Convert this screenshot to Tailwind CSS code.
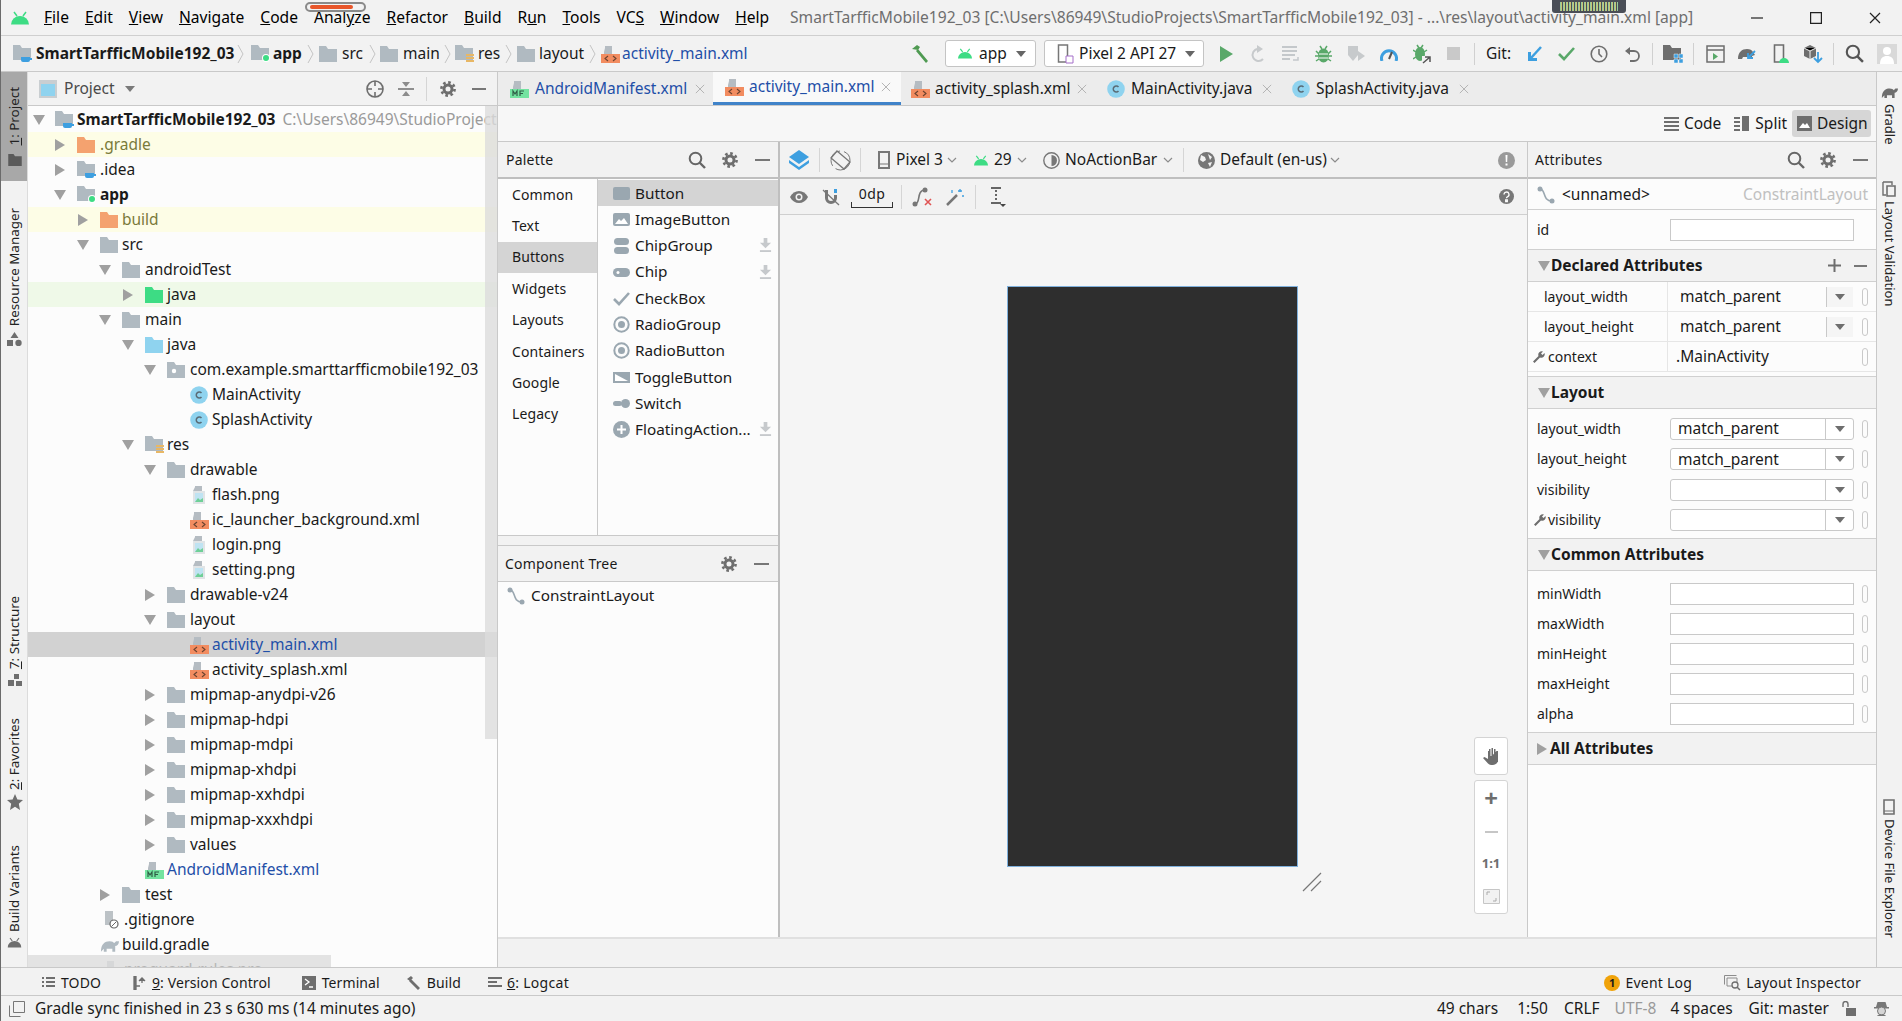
<!DOCTYPE html>
<html>
<head>
<meta charset="UTF-8">
<title>Android Studio</title>
<script src="https://cdn.jsdelivr.net/npm/@tailwindcss/browser@4"></script>
</head>
<body class="relative w-[1902px] h-[1021px] overflow-hidden bg-[#f2f2f2] text-[15.5px] leading-none text-[#1a1a1a] font-['Noto_Sans',sans-serif] [&_svg]:shrink-0">

<svg class="hidden">
  <symbol id="droid" viewBox="0 0 20 14"><path d="M1 13.5a9 8.500 0 0 1 18 0z" fill="currentColor"/><path d="M4 1l3 4M16 1l-3 4" stroke="currentColor" stroke-width="1.500"/></symbol>
  <symbol id="down" viewBox="0 0 12 12"><path d="M0 1h12L6 11z" fill="#a0a0a0"/></symbol>
  <symbol id="right" viewBox="0 0 12 12"><path d="M1 0v12l10-6z" fill="#a0a0a0"/></symbol>
  <symbol id="folder" viewBox="0 0 18 16"><path d="M0 0h7l2 3h9v13H0z" fill="currentColor"/></symbol>
  <symbol id="modfolder" viewBox="0 0 20 18"><path d="M0 0h7l2 3h9v12H0z" fill="#b0bac1"/><path d="M8 12h9v3a2 2 0 0 1-2 2h-5a2 2 0 0 1-2-2z" fill="#3d9fe0"/><path d="M17 13h2v2h-2z" fill="#3d9fe0"/></symbol>
  <symbol id="appfolder" viewBox="0 0 20 18"><path d="M0 0h7l2 3h9v12H0z" fill="#b0bac1"/><circle cx="15" cy="13" r="4" fill="#fff"/><circle cx="15" cy="13" r="3" fill="#3ddc84"/></symbol>
  <symbol id="resfolder" viewBox="0 0 20 18"><path d="M0 0h7l2 3h9v12H0z" fill="#b0bac1"/><path d="M11 9h8v2h-8zM11 12h8v2h-8zM11 15h8v2h-8z" fill="#e8b765"/></symbol>
  <symbol id="pkgfolder" viewBox="0 0 18 16"><path d="M0 0h7l2 3h9v13H0z" fill="#b0bac1"/><circle cx="7" cy="9" r="2.200" fill="#fff"/></symbol>
  <symbol id="xml" viewBox="0 0 19 18"><path d="M4 1h7v8H4zM3 7l1-4v6H3z" fill="#b5bcc2"/><path d="M0 9h19v9H0z" fill="#f28c60"/><path d="M7 11l-3 2.500 3 2.500M12 11l3 2.500-3 2.500" fill="none" stroke="#6b4330" stroke-width="1.100"/></symbol>
  <symbol id="mf" viewBox="0 0 19 18"><path d="M4 1h7v8H4zM3 7l1-4v6H3z" fill="#b5bcc2"/><path d="M0 9h19v9H0z" fill="#73e3a0"/><path d="M3 16v-5l2 3 2-3v5M10 16v-5h4M10 13.500h3" fill="none" stroke="#2f5d46" stroke-width="1.200"/></symbol>
  <symbol id="png" viewBox="0 0 18 18"><path d="M5 0h7v5H5zM3 5l2-4v4z" fill="#b5bcc2"/><path d="M3 5h12v13H3z" fill="#e0e4e6"/><path d="M5 7h8v9H5z" fill="#bfe3f2"/><path d="M5 16l3-4 2 2 3-2v4z" fill="#6fcf97"/></symbol>
  <symbol id="cls" viewBox="0 0 18 18"><circle cx="9" cy="9" r="8.800" fill="#8fd3ef"/><path d="M11.500 7a3 3 0 1 0 0 4" fill="none" stroke="#5a6c76" stroke-width="1.500"/></symbol>
  <symbol id="gear" viewBox="0 0 16 16"><circle cx="8" cy="8" r="4" fill="none" stroke="currentColor" stroke-width="3"/><circle cx="8" cy="8" r="6.600" fill="none" stroke="currentColor" stroke-width="2.600" stroke-dasharray="2.600 2.580"/></symbol>
  <symbol id="search" viewBox="0 0 18 18"><circle cx="7.500" cy="7.500" r="5.800" fill="none" stroke="currentColor" stroke-width="2"/><path d="M11.500 11.500l5.500 5.500" stroke="currentColor" stroke-width="2.400"/></symbol>
  <symbol id="x" viewBox="0 0 12 12"><path d="M1 1l10 10M11 1L1 11" stroke="currentColor" stroke-width="1.200"/></symbol>
  <symbol id="chev" viewBox="0 0 7 20"><path d="M1 1l5 9-5 9" fill="none" stroke="#c4c4c4"/></symbol>
  <symbol id="caret" viewBox="0 0 10 6"><path d="M1 1l4 4 4-4" fill="none" stroke="#8c8c8c" stroke-width="1.200"/></symbol>
  <symbol id="constraint" viewBox="0 0 18 18"><circle cx="3" cy="3" r="2.500" fill="currentColor"/><circle cx="15" cy="15" r="2.500" fill="currentColor"/><path d="M3 3c6 0 2 12 12 12" fill="none" stroke="currentColor" stroke-width="1.600"/></symbol>
  <symbol id="dl" viewBox="0 0 14 16"><path d="M5 0h4v5h4l-6 6-6-6h4z" fill="#c6c9cc"/><path d="M1 13h12v2H1z" fill="#c6c9cc"/></symbol>
</svg>

<div class="absolute left-0 top-0 w-px h-full bg-[#6b6b6b] z-30"></div>
<div class="absolute left-[305px] top-[2px] w-[61px] h-[10px] rounded-full border-2 border-[#8a8a8a] bg-[#f2f2f2] flex items-center px-[2px] z-20"><div class="w-[43px] h-[4px] bg-[#e8562a] rounded-full ml-[1px]"></div></div>
<div class="absolute left-[1552px] top-0 w-[74px] h-[13px] rounded-b-[3px] bg-[#4a4e57] flex items-center justify-center z-20"><div class="w-[58px] h-[9px] bg-[repeating-linear-gradient(90deg,#7fd0b0_0,#e0c060_2px,#4a4e57_2px,#4a4e57_3px)]"></div></div>

<!-- title bar -->
<div class="h-[36px] flex items-center border-b border-[#cfcfcf] text-[#000]">
  <svg class="w-[20px] h-[14px] ml-[10px] text-[#3ddc84]"><use href="#droid"/></svg>
  <div class="flex items-center gap-[16px] ml-[14px] text-[15.6px]">
    <span><u>F</u>ile</span><span><u>E</u>dit</span><span><u>V</u>iew</span><span><u>N</u>avigate</span><span><u>C</u>ode</span><span>Anal<u>y</u>ze</span><span><u>R</u>efactor</span><span><u>B</u>uild</span><span>R<u>u</u>n</span><span><u>T</u>ools</span><span>VC<u>S</u></span><span><u>W</u>indow</span><span><u>H</u>elp</span>
  </div>
  <span class="absolute left-[790px] top-[10px] text-[#6e6e6e] whitespace-nowrap text-[15.6px]">SmartTarfficMobile192_03 [C:\Users\86949\StudioProjects\SmartTarfficMobile192_03] - ...\res\layout\activity_main.xml [app]</span>
  <div class="ml-auto flex items-center gap-[47px] pr-[21px]">
    <svg class="w-[12px] h-[12px]" viewBox="0 0 12 12"><path d="M0 6h12" stroke="#222" stroke-width="1.200"/></svg>
    <svg class="w-[12px] h-[12px]" viewBox="0 0 12 12"><path d="M.6.6h10.800v10.800H.6z" fill="none" stroke="#222" stroke-width="1.200"/></svg>
    <svg class="w-[12px] h-[12px] text-[#222]"><use href="#x"/></svg>
  </div>
</div>

<!-- nav bar -->
<div class="h-[36px] flex items-center border-b border-[#c9c9c9] pl-[13px]">
  <svg class="w-[20px] h-[18px]"><use href="#modfolder"/></svg>
  <b class="w-[197px] ml-[3px] whitespace-nowrap">SmartTarfficMobile192_03</b>
  <svg class="w-[7px] h-[20px] ml-[4px]"><use href="#chev"/></svg>
  <svg class="w-[20px] h-[18px] ml-[7px]"><use href="#appfolder"/></svg>
  <b class="w-[29px] ml-[2px]">app</b>
  <svg class="w-[7px] h-[20px] ml-[5px]"><use href="#chev"/></svg>
  <svg class="w-[18px] h-[16px] ml-[5px] text-[#b0bac1]"><use href="#folder"/></svg>
  <span class="w-[22px] ml-[5px]">src</span>
  <svg class="w-[7px] h-[20px] ml-[5px]"><use href="#chev"/></svg>
  <svg class="w-[18px] h-[16px] ml-[4px] text-[#b0bac1]"><use href="#folder"/></svg>
  <span class="w-[36px] ml-[5px]">main</span>
  <svg class="w-[7px] h-[20px] ml-[5px]"><use href="#chev"/></svg>
  <svg class="w-[20px] h-[18px] ml-[4px]"><use href="#resfolder"/></svg>
  <span class="w-[22px] ml-[3px]">res</span>
  <svg class="w-[7px] h-[20px] ml-[5px]"><use href="#chev"/></svg>
  <svg class="w-[18px] h-[16px] ml-[5px] text-[#b0bac1]"><use href="#folder"/></svg>
  <span class="w-[45px] ml-[4px]">layout</span>
  <svg class="w-[7px] h-[20px] ml-[5px]"><use href="#chev"/></svg>
  <svg class="w-[19px] h-[18px] ml-[5px]"><use href="#xml"/></svg>
  <span class="w-[124px] ml-[2px] text-[#1f4fa8] whitespace-nowrap">activity_main.xml</span>

  <svg class="w-[19px] h-[19px] ml-[165px]" viewBox="0 0 19 19"><path d="M1 5l5-4 3 2-2 3zM7 5l10 12-2 2L5 7z" fill="#4f9a52"/></svg>
  <div class="w-[91px] h-[27px] ml-[15px] bg-white border border-[#c4c4c4] rounded-[3px] flex items-center pl-[11px]">
    <svg class="w-[16px] h-[11px] text-[#3ddc84]"><use href="#droid"/></svg><span class="ml-[6px]">app</span>
    <svg class="w-[10px] h-[6px] ml-[9px]" viewBox="0 0 10 6"><path d="M0 0h10L5 6z" fill="#666"/></svg>
  </div>
  <div class="w-[160px] h-[27px] ml-[8px] bg-white border border-[#c4c4c4] rounded-[3px] flex items-center pl-[12px]">
    <svg class="w-[17px] h-[20px]" viewBox="0 0 17 20"><path d="M1.500 1h9v17h-9z" fill="none" stroke="#777" stroke-width="1.500"/><path d="M9 12h7v7H9z" fill="#fff" stroke="#a56fc9"/></svg>
    <span class="ml-[5px] whitespace-nowrap">Pixel 2 API 27</span>
    <svg class="w-[10px] h-[6px] ml-[9px]" viewBox="0 0 10 6"><path d="M0 0h10L5 6z" fill="#666"/></svg>
  </div>
  <svg class="w-[13px] h-[16px] ml-[16px]" viewBox="0 0 13 16"><path d="M0 0l13 8-13 8z" fill="#59a869"/></svg>
  <svg class="w-[16px] h-[18px] ml-[17px]" viewBox="0 0 16 18"><path d="M13 14A6 6 0 1 1 8 4" fill="none" stroke="#c7cacc" stroke-width="2"/><path d="M7 0l6 4-6 4z" fill="#c7cacc"/></svg>
  <svg class="w-[18px] h-[18px] ml-[16px]" viewBox="0 0 18 18"><path d="M0 1h15v2H0zM0 5h15v2H0zM0 9h13v2H0zM0 13h8v2H0z" fill="#c4c8cb"/><path d="M11 15h5v-3" fill="none" stroke="#c4c8cb" stroke-width="1.500"/></svg>
  <svg class="w-[17px] h-[18px] ml-[15px]" viewBox="0 0 17 18"><ellipse cx="8.500" cy="10.500" rx="5.500" ry="7" fill="#59a869"/><path d="M1 6l3 3M16 6l-3 3M0 11h3M17 11h-3M1 16l3-2M16 16l-3-2M5 1l2 3M12 1l-2 3" stroke="#59a869" stroke-width="1.500"/><path d="M4 9h9M4 13h9" stroke="#fff"/></svg>
  <svg class="w-[19px] h-[20px] ml-[15px]" viewBox="0 0 19 20"><path d="M1 2h10v9l-5 6-5-6z" fill="#c7cacc"/><path d="M11 7l7 5-7 5z" fill="#c7cacc"/></svg>
  <svg class="w-[18px] h-[14px] ml-[14px]" viewBox="0 0 18 14"><path d="M2 14a7.500 7.500 0 1 1 14 0" fill="none" stroke="#3d9fe0" stroke-width="3"/><path d="M9 12l3-7" stroke="#555" stroke-width="2"/></svg>
  <svg class="w-[19px] h-[20px] ml-[15px]" viewBox="0 0 19 20"><ellipse cx="7" cy="10" rx="5" ry="7" fill="#59a869"/><path d="M0 6l3 2M14 6l-3 2M0 15l3-2M4 1l2 3M10 1L8 4" stroke="#59a869" stroke-width="1.500"/><path d="M9 12h10v8H9z" fill="#f2f2f2"/><path d="M10 19l7-6M12 13h5v5" fill="none" stroke="#555" stroke-width="1.500"/></svg>
  <div class="w-[13px] h-[13px] ml-[15px] bg-[#c9c9c9]"></div>
  <div class="w-px h-[22px] ml-[14px] bg-[#d0d0d0]"></div>
  <span class="ml-[11px] w-[25px]">Git:</span>
  <svg class="w-[15px] h-[16px] ml-[16px]" viewBox="0 0 15 16"><path d="M14 1L4 12" stroke="#3d9fe0" stroke-width="2.500"/><path d="M1 6v9h9v-3H4V6z" fill="#3d9fe0"/></svg>
  <svg class="w-[17px] h-[14px] ml-[16px]" viewBox="0 0 17 14"><path d="M1 7l5 5L16 1" fill="none" stroke="#59a869" stroke-width="2.600"/></svg>
  <svg class="w-[18px] h-[18px] ml-[15px]" viewBox="0 0 18 18"><circle cx="9" cy="9" r="7.800" fill="none" stroke="#6e6e6e" stroke-width="1.600"/><path d="M9 4v5l3 3" fill="none" stroke="#6e6e6e" stroke-width="1.600"/></svg>
  <svg class="w-[16px] h-[16px] ml-[16px]" viewBox="0 0 16 16"><path d="M4 5h6a5 5 0 0 1 0 10H6" fill="none" stroke="#6e6e6e" stroke-width="1.800"/><path d="M6 1L1 5l5 4z" fill="#6e6e6e"/></svg>
  <div class="w-px h-[22px] ml-[12px] bg-[#d0d0d0]"></div>
  <svg class="w-[20px] h-[18px] ml-[10px]" viewBox="0 0 20 18"><path d="M0 0h7l2 3h9v12H0z" fill="#6e6e6e"/><path d="M11 9h4v4h-4zM16 9h4v4h-4zM16 14h4v4h-4zM11 14h4v4h-4z" fill="#3d9fe0" stroke="#f2f2f2" stroke-width=".5"/></svg>
  <div class="w-px h-[22px] ml-[10px] bg-[#d0d0d0]"></div>
  <svg class="w-[19px] h-[18px] ml-[12px]" viewBox="0 0 19 18"><path d="M1 1h17v16H1zM1 5h17" fill="none" stroke="#6e6e6e" stroke-width="1.500"/><path d="M7 8l5 3.500-5 3.500z" fill="#59a869"/></svg>
  <svg class="w-[20px] h-[20px] ml-[12px]" viewBox="0 0 20 20"><path d="M1 15c0-7 4-10 9-10 3 0 5 1 6 3l2 3-3 1v3h-3l-1-2H6l-1 2z" fill="#6e6e6e"/><path d="M18 7l-7 7M11 9v5h5" fill="none" stroke="#3d9fe0" stroke-width="1.800"/></svg>
  <svg class="w-[16px] h-[20px] ml-[16px]" viewBox="0 0 16 20"><path d="M1.500 1h9v17h-9z" fill="none" stroke="#6e6e6e" stroke-width="1.600"/><path d="M6 19a5 5 0 0 1 10 0z" fill="#3ddc84"/></svg>
  <svg class="w-[20px] h-[20px] ml-[14px]" viewBox="0 0 20 20"><path d="M1 4l6-3 6 3v8l-6 3-6-3z" fill="#6e6e6e"/><path d="M1 4l6 3 6-3M7 7v8" stroke="#f2f2f2"/><path d="M15 8v10M11 14l4 4 4-4" fill="none" stroke="#3d9fe0" stroke-width="1.800"/></svg>
  <div class="w-px h-[22px] ml-[10px] bg-[#d0d0d0]"></div>
  <svg class="w-[19px] h-[19px] ml-[11px] text-[#555]"><use href="#search"/></svg>
  <svg class="w-[20px] h-[20px] ml-[13px]" viewBox="0 0 20 20"><path d="M0 0h20v20H0z" fill="#d9d9d9"/><circle cx="10" cy="7" r="4" fill="#fff"/><path d="M3 20c0-6 3-8 7-8s7 2 7 8z" fill="#fff"/></svg>
</div>

<!-- main -->
<div class="h-[895px] flex">

  <!-- left stripe -->
  <div class="w-[28px] flex flex-col items-center border-r border-[#dcdcdc] pl-[2px] text-[13.4px] text-[#222]">
    <div class="w-[calc(100%+2px)] -ml-[2px] h-[109px] bg-[#a8a8a8] flex flex-col items-center pt-[15px] pl-[2px]">
      <span class="[writing-mode:vertical-rl] rotate-180 whitespace-nowrap"><u>1</u>: Project</span>
      <svg class="w-[14px] h-[12px] mt-[9px] text-[#5a5a5a]"><use href="#folder"/></svg>
    </div>
    <span class="mt-[27px] [writing-mode:vertical-rl] rotate-180 whitespace-nowrap">Resource Manager</span>
    <svg class="w-[15px] h-[14px] mt-[6px]" viewBox="0 0 15 14"><path d="M7.500 0l4 6h-8zM0 8h6v6H0z" fill="#6e6e6e"/><circle cx="11.500" cy="11" r="3.200" fill="#6e6e6e"/></svg>
    <span class="mt-[250px] [writing-mode:vertical-rl] rotate-180 whitespace-nowrap"><u>7</u>: Structure</span>
    <svg class="w-[14px] h-[12px] mt-[5px]" viewBox="0 0 14 12"><path d="M6 0h5v5H6zM0 6h6v6H0zM8 7h6v5H8z" fill="#6e6e6e"/></svg>
    <span class="mt-[32px] [writing-mode:vertical-rl] rotate-180 whitespace-nowrap"><u>2</u>: Favorites</span>
    <svg class="w-[16px] h-[16px] mt-[4px]" viewBox="0 0 16 16"><path d="M8 0l2.400 5.400 5.600.6-4.200 3.800L13 16l-5-3.200L3 16l1.200-6.200L0 6l5.600-.6z" fill="#6e6e6e"/></svg>
    <span class="mt-[35px] [writing-mode:vertical-rl] rotate-180 whitespace-nowrap">Build Variants</span>
    <svg class="w-[15px] h-[11px] mt-[5px] text-[#6e6e6e]"><use href="#droid"/></svg>
  </div>

  <!-- project panel -->
  <div class="w-[470px] flex flex-col border-r border-[#c9c9c9]">
    <div class="h-[34px] flex items-center border-b border-[#c9c9c9] relative">
      <svg class="w-[18px] h-[18px] ml-[11px]" viewBox="0 0 18 18"><path d="M0 0h18v18H0z" fill="#c9ced1"/><path d="M2 4h14v12H2z" fill="#8fd3ef"/></svg>
      <span class="ml-[7px] text-[#4a4a4a]">Project</span>
      <svg class="w-[10px] h-[6px] ml-[10px]" viewBox="0 0 10 6"><path d="M0 0h10L5 6z" fill="#7a7a7a"/></svg>
      <svg class="w-[18px] h-[18px] ml-[231px]" viewBox="0 0 18 18"><circle cx="9" cy="9" r="8" fill="none" stroke="#6e6e6e" stroke-width="1.600"/><path d="M9 1v5M9 12v5M1 9h5M12 9h5" stroke="#6e6e6e" stroke-width="1.600"/></svg>
      <svg class="w-[16px] h-[18px] ml-[14px]" viewBox="0 0 16 18"><path d="M0 9h16" stroke="#6e6e6e" stroke-width="1.500"/><path d="M4 2h8L8 7zM8 11l4 5H4z" fill="#8c8c8c"/></svg>
      <div class="w-px h-[24px] ml-[12px] bg-[#d5d5d5]"></div>
      <svg class="w-[16px] h-[16px] ml-[13px] text-[#6e6e6e]"><use href="#gear"/></svg>
      <div class="w-[14px] h-[2px] ml-[16px] bg-[#777]"></div>
    </div>
    <div class="relative flex-1 overflow-hidden bg-[#fcfcfc] pt-px">
      <div class="h-[25px] flex items-center pl-[5px]"><svg class="w-[12px] h-[12px]"><use href="#down"/></svg><svg class="w-[20px] h-[18px] ml-[10px]"><use href="#modfolder"/></svg><b class="ml-[2px] whitespace-nowrap">SmartTarfficMobile192_03</b><span class="ml-[7px] text-[#9a9a9a] whitespace-nowrap">C:\Users\86949\StudioProjects\SmartTarfficMobile192_03</span></div>
      <div class="h-[25px] flex items-center pl-[26px] bg-[#fdfde6] text-[#7a7a3a]"><svg class="w-[12px] h-[12px]"><use href="#right"/></svg><svg class="w-[18px] h-[16px] ml-[11px] text-[#f4a26f]"><use href="#folder"/></svg><span class="ml-[5px]">.gradle</span></div>
      <div class="h-[25px] flex items-center pl-[26px]"><svg class="w-[12px] h-[12px]"><use href="#right"/></svg><svg class="w-[20px] h-[18px] ml-[11px]"><use href="#modfolder"/></svg><span class="ml-[3px]">.idea</span></div>
      <div class="h-[25px] flex items-center pl-[26px]"><svg class="w-[12px] h-[12px]"><use href="#down"/></svg><svg class="w-[20px] h-[18px] ml-[11px]"><use href="#appfolder"/></svg><b class="ml-[3px]">app</b></div>
      <div class="h-[25px] flex items-center pl-[49px] bg-[#fdfde6] text-[#7a7a3a]"><svg class="w-[12px] h-[12px]"><use href="#right"/></svg><svg class="w-[18px] h-[16px] ml-[11px] text-[#f4a26f]"><use href="#folder"/></svg><span class="ml-[4px]">build</span></div>
      <div class="h-[25px] flex items-center pl-[49px]"><svg class="w-[12px] h-[12px]"><use href="#down"/></svg><svg class="w-[18px] h-[16px] ml-[11px] text-[#b0bac1]"><use href="#folder"/></svg><span class="ml-[4px]">src</span></div>
      <div class="h-[25px] flex items-center pl-[71px]"><svg class="w-[12px] h-[12px]"><use href="#down"/></svg><svg class="w-[18px] h-[16px] ml-[11px] text-[#b0bac1]"><use href="#folder"/></svg><span class="ml-[5px]">androidTest</span></div>
      <div class="h-[25px] flex items-center pl-[94px] bg-[#eff9e8]"><svg class="w-[12px] h-[12px]"><use href="#right"/></svg><svg class="w-[18px] h-[16px] ml-[11px] text-[#3ddc84]"><use href="#folder"/></svg><span class="ml-[4px]">java</span></div>
      <div class="h-[25px] flex items-center pl-[71px]"><svg class="w-[12px] h-[12px]"><use href="#down"/></svg><svg class="w-[18px] h-[16px] ml-[11px] text-[#b0bac1]"><use href="#folder"/></svg><span class="ml-[5px]">main</span></div>
      <div class="h-[25px] flex items-center pl-[94px]"><svg class="w-[12px] h-[12px]"><use href="#down"/></svg><svg class="w-[18px] h-[16px] ml-[11px] text-[#8fd3ef]"><use href="#folder"/></svg><span class="ml-[4px]">java</span></div>
      <div class="h-[25px] flex items-center pl-[116px]"><svg class="w-[12px] h-[12px]"><use href="#down"/></svg><svg class="w-[18px] h-[16px] ml-[11px]"><use href="#pkgfolder"/></svg><span class="ml-[5px] whitespace-nowrap">com.example.smarttarfficmobile192_03</span></div>
      <div class="h-[25px] flex items-center pl-[162px]"><svg class="w-[18px] h-[18px]"><use href="#cls"/></svg><span class="ml-[4px]">MainActivity</span></div>
      <div class="h-[25px] flex items-center pl-[162px]"><svg class="w-[18px] h-[18px]"><use href="#cls"/></svg><span class="ml-[4px]">SplashActivity</span></div>
      <div class="h-[25px] flex items-center pl-[94px]"><svg class="w-[12px] h-[12px]"><use href="#down"/></svg><svg class="w-[20px] h-[18px] ml-[11px]"><use href="#resfolder"/></svg><span class="ml-[2px]">res</span></div>
      <div class="h-[25px] flex items-center pl-[116px]"><svg class="w-[12px] h-[12px]"><use href="#down"/></svg><svg class="w-[18px] h-[16px] ml-[11px] text-[#b0bac1]"><use href="#folder"/></svg><span class="ml-[5px]">drawable</span></div>
      <div class="h-[25px] flex items-center pl-[162px]"><svg class="w-[18px] h-[18px]"><use href="#png"/></svg><span class="ml-[4px]">flash.png</span></div>
      <div class="h-[25px] flex items-center pl-[162px]"><svg class="w-[19px] h-[18px]"><use href="#xml"/></svg><span class="ml-[3px]">ic_launcher_background.xml</span></div>
      <div class="h-[25px] flex items-center pl-[162px]"><svg class="w-[18px] h-[18px]"><use href="#png"/></svg><span class="ml-[4px]">login.png</span></div>
      <div class="h-[25px] flex items-center pl-[162px]"><svg class="w-[18px] h-[18px]"><use href="#png"/></svg><span class="ml-[4px]">setting.png</span></div>
      <div class="h-[25px] flex items-center pl-[116px]"><svg class="w-[12px] h-[12px]"><use href="#right"/></svg><svg class="w-[18px] h-[16px] ml-[11px] text-[#b0bac1]"><use href="#folder"/></svg><span class="ml-[5px]">drawable-v24</span></div>
      <div class="h-[25px] flex items-center pl-[116px]"><svg class="w-[12px] h-[12px]"><use href="#down"/></svg><svg class="w-[18px] h-[16px] ml-[11px] text-[#b0bac1]"><use href="#folder"/></svg><span class="ml-[5px]">layout</span></div>
      <div class="h-[25px] flex items-center pl-[162px] bg-[#d2d2d2] text-[#1f4fa8]"><svg class="w-[19px] h-[18px]"><use href="#xml"/></svg><span class="ml-[3px]">activity_main.xml</span></div>
      <div class="h-[25px] flex items-center pl-[162px]"><svg class="w-[19px] h-[18px]"><use href="#xml"/></svg><span class="ml-[3px]">activity_splash.xml</span></div>
      <div class="h-[25px] flex items-center pl-[116px]"><svg class="w-[12px] h-[12px]"><use href="#right"/></svg><svg class="w-[18px] h-[16px] ml-[11px] text-[#b0bac1]"><use href="#folder"/></svg><span class="ml-[5px]">mipmap-anydpi-v26</span></div>
      <div class="h-[25px] flex items-center pl-[116px]"><svg class="w-[12px] h-[12px]"><use href="#right"/></svg><svg class="w-[18px] h-[16px] ml-[11px] text-[#b0bac1]"><use href="#folder"/></svg><span class="ml-[5px]">mipmap-hdpi</span></div>
      <div class="h-[25px] flex items-center pl-[116px]"><svg class="w-[12px] h-[12px]"><use href="#right"/></svg><svg class="w-[18px] h-[16px] ml-[11px] text-[#b0bac1]"><use href="#folder"/></svg><span class="ml-[5px]">mipmap-mdpi</span></div>
      <div class="h-[25px] flex items-center pl-[116px]"><svg class="w-[12px] h-[12px]"><use href="#right"/></svg><svg class="w-[18px] h-[16px] ml-[11px] text-[#b0bac1]"><use href="#folder"/></svg><span class="ml-[5px]">mipmap-xhdpi</span></div>
      <div class="h-[25px] flex items-center pl-[116px]"><svg class="w-[12px] h-[12px]"><use href="#right"/></svg><svg class="w-[18px] h-[16px] ml-[11px] text-[#b0bac1]"><use href="#folder"/></svg><span class="ml-[5px]">mipmap-xxhdpi</span></div>
      <div class="h-[25px] flex items-center pl-[116px]"><svg class="w-[12px] h-[12px]"><use href="#right"/></svg><svg class="w-[18px] h-[16px] ml-[11px] text-[#b0bac1]"><use href="#folder"/></svg><span class="ml-[5px]">mipmap-xxxhdpi</span></div>
      <div class="h-[25px] flex items-center pl-[116px]"><svg class="w-[12px] h-[12px]"><use href="#right"/></svg><svg class="w-[18px] h-[16px] ml-[11px] text-[#b0bac1]"><use href="#folder"/></svg><span class="ml-[5px]">values</span></div>
      <div class="h-[25px] flex items-center pl-[117px] text-[#1f4fa8]"><svg class="w-[19px] h-[18px]"><use href="#mf"/></svg><span class="ml-[3px]">AndroidManifest.xml</span></div>
      <div class="h-[25px] flex items-center pl-[71px]"><svg class="w-[12px] h-[12px]"><use href="#right"/></svg><svg class="w-[18px] h-[16px] ml-[11px] text-[#b0bac1]"><use href="#folder"/></svg><span class="ml-[5px]">test</span></div>
      <div class="h-[25px] flex items-center pl-[74px]"><svg class="w-[18px] h-[18px]" viewBox="0 0 18 18"><path d="M3 0h8v14H3z" fill="#bcc2c6"/><circle cx="12" cy="13" r="4" fill="#fff" stroke="#666" stroke-width="1.200"/><path d="M9.500 15.500l5-5" stroke="#666"/></svg><span class="ml-[4px]">.gitignore</span></div>
      <div class="h-[25px] flex items-center pl-[72px]"><svg class="w-[19px] h-[15px]" viewBox="0 0 20 15"><path d="M1 15C1 7 5 4 10 4c3 0 4 1 5 2l2-2 3 0c0 3-2 5-4 5v6h-3v-3H7v3H4v-3z" fill="#b0bac1"/></svg><span class="ml-[3px]">build.gradle</span></div>
      <div class="h-[25px] flex items-center pl-[74px]"><svg class="w-[18px] h-[18px]" viewBox="0 0 18 18"><path d="M5 0h7v18H5z" fill="#bcc2c6"/></svg><span class="ml-[4px]">proguard-rules.pro</span></div>
      <div class="absolute right-0 top-0 w-[12px] h-[633px] bg-[#dcdcdc]/80"></div>
      <div class="absolute left-0 bottom-0 w-[303px] h-[12px] bg-[#dcdcdc]/80"></div>
    </div>
  </div>

  <!-- editor -->
  <div class="w-[1378px] flex flex-col">
    <!-- tabs -->
    <div class="h-[34px] flex items-center bg-[#ececec] border-b border-[#c9c9c9]">
      <svg class="w-[19px] h-[18px] ml-[12px]"><use href="#mf"/></svg>
      <span class="w-[152px] ml-[6px] text-[#1f4fa8] whitespace-nowrap">AndroidManifest.xml</span>
      <svg class="w-[10px] h-[10px] ml-[8px] text-[#b5b5b5]"><use href="#x"/></svg>
      <div class="w-[188px] h-[33px] ml-[8px] flex items-center bg-[#f9f9f9] border-b-[3px] border-[#4083c9]">
        <svg class="w-[19px] h-[18px] ml-[12px]"><use href="#xml"/></svg>
        <span class="w-[124px] ml-[5px] text-[#1f4fa8] whitespace-nowrap">activity_main.xml</span>
        <svg class="w-[10px] h-[10px] ml-[8px] text-[#b5b5b5]"><use href="#x"/></svg>
      </div>
      <svg class="w-[19px] h-[18px] ml-[10px]"><use href="#xml"/></svg>
      <span class="w-[134px] ml-[5px] whitespace-nowrap">activity_splash.xml</span>
      <svg class="w-[10px] h-[10px] ml-[8px] text-[#b5b5b5]"><use href="#x"/></svg>
      <svg class="w-[18px] h-[18px] ml-[20px]"><use href="#cls"/></svg>
      <span class="w-[123px] ml-[6px] whitespace-nowrap">MainActivity.java</span>
      <svg class="w-[10px] h-[10px] ml-[8px] text-[#b5b5b5]"><use href="#x"/></svg>
      <svg class="w-[18px] h-[18px] ml-[20px]"><use href="#cls"/></svg>
      <span class="w-[134px] ml-[6px] whitespace-nowrap">SplashActivity.java</span>
      <svg class="w-[10px] h-[10px] ml-[9px] text-[#b5b5b5]"><use href="#x"/></svg>
    </div>
    <!-- code / split / design -->
    <div class="h-[36px] flex items-center justify-end border-b border-[#c9c9c9] bg-[#f7f7f7] pr-[5px]">
      <svg class="w-[15px] h-[15px]" viewBox="0 0 15 15"><path d="M0 1h15v2H0zM0 5h15v2H0zM0 9h15v2H0zM0 13h15v2H0z" fill="#6e6e6e"/></svg>
      <span class="ml-[5px]">Code</span>
      <svg class="w-[15px] h-[15px] ml-[13px]" viewBox="0 0 15 15"><path d="M0 1h6v2H0zM0 5h6v2H0zM0 9h6v2H0zM0 13h6v2H0zM8 0h7v15H8z" fill="#6e6e6e"/></svg>
      <span class="ml-[6px]">Split</span>
      <div class="h-[27px] w-[79px] ml-[5px] rounded-[3px] bg-[#d6d6d6] flex items-center pl-[5px]">
        <svg class="w-[15px] h-[15px]" viewBox="0 0 15 15"><path d="M0 0h15v15H0z" fill="#6e6e6e"/><path d="M2 12l4-5 2 2 2-2 3 5z" fill="#fff"/></svg>
        <span class="ml-[5px] whitespace-nowrap">Design</span>
      </div>
    </div>
    <div class="h-[795px] flex">

      <!-- palette -->
      <div class="w-[282px] flex flex-col border-r-2 border-[#bfbfbf] text-[14px]">
        <div class="h-[37px] flex items-center border-b-2 border-[#bfbfbf] pl-[8px] pt-[1px] tracking-[.2px]">
          <span class="w-[46px]">Palette</span>
          <svg class="w-[18px] h-[18px] ml-[136px] text-[#666]"><use href="#search"/></svg>
          <svg class="w-[16px] h-[16px] ml-[16px] text-[#6e6e6e]"><use href="#gear"/></svg>
          <div class="w-[15px] h-[2px] ml-[17px] bg-[#777]"></div>
        </div>
        <div class="h-[357px] flex bg-[#fcfcfc] border-b border-[#c9c9c9]">
          <div class="w-[100px] border-r border-[#c9c9c9] tracking-[.1px]">
            <div class="h-[31.4px] flex items-center pl-[14px]">Common</div>
            <div class="h-[31.4px] flex items-center pl-[14px]">Text</div>
            <div class="h-[31.4px] flex items-center pl-[14px] bg-[#d4d4d4]">Buttons</div>
            <div class="h-[31.4px] flex items-center pl-[14px]">Widgets</div>
            <div class="h-[31.4px] flex items-center pl-[14px]">Layouts</div>
            <div class="h-[31.4px] flex items-center pl-[14px]">Containers</div>
            <div class="h-[31.4px] flex items-center pl-[14px]">Google</div>
            <div class="h-[31.4px] flex items-center pl-[14px]">Legacy</div>
          </div>
          <div class="flex-1 text-[15.3px] pt-px">
            <div class="h-[26.3px] flex items-center pl-[15px] bg-[#d4d4d4]"><svg class="w-[17px] h-[17px]" viewBox="0 0 17 17"><rect y="2" width="17" height="13" rx="2" fill="#9aa7b0"/></svg><span class="ml-[5px]">Button</span></div>
            <div class="h-[26.3px] flex items-center pl-[15px]"><svg class="w-[17px] h-[17px]" viewBox="0 0 17 17"><rect y="2" width="17" height="13" rx="2" fill="#9aa7b0"/><path d="M2 13l4-5 2 2 3-3 4 6z" fill="#fff"/></svg><span class="ml-[5px]">ImageButton</span></div>
            <div class="h-[26.3px] flex items-center pl-[15px]"><svg class="w-[17px] h-[17px]" viewBox="0 0 17 17"><rect x="1" y="1" width="15" height="7" rx="3.500" fill="#9aa7b0"/><rect x="1" y="10" width="15" height="7" rx="3.500" fill="#9aa7b0"/></svg><span class="ml-[5px]">ChipGroup</span><svg class="w-[13px] h-[15px] ml-auto mr-[6px]"><use href="#dl"/></svg></div>
            <div class="h-[26.3px] flex items-center pl-[15px]"><svg class="w-[17px] h-[17px]" viewBox="0 0 17 17"><rect x="0" y="4" width="17" height="9" rx="4.500" fill="#9aa7b0"/><circle cx="5" cy="8.500" r="1.500" fill="#fff"/></svg><span class="ml-[5px]">Chip</span><svg class="w-[13px] h-[15px] ml-auto mr-[6px]"><use href="#dl"/></svg></div>
            <div class="h-[26.3px] flex items-center pl-[15px]"><svg class="w-[17px] h-[17px]" viewBox="0 0 17 17"><path d="M1 9l5 5L16 3" fill="none" stroke="#9aa7b0" stroke-width="2.600"/></svg><span class="ml-[5px]">CheckBox</span></div>
            <div class="h-[26.3px] flex items-center pl-[15px]"><svg class="w-[17px] h-[17px]" viewBox="0 0 17 17"><circle cx="8.500" cy="8.500" r="7.200" fill="none" stroke="#9aa7b0" stroke-width="2"/><circle cx="8.500" cy="8.500" r="3.500" fill="#9aa7b0"/></svg><span class="ml-[5px]">RadioGroup</span></div>
            <div class="h-[26.3px] flex items-center pl-[15px]"><svg class="w-[17px] h-[17px]" viewBox="0 0 17 17"><circle cx="8.500" cy="8.500" r="7.200" fill="none" stroke="#9aa7b0" stroke-width="2"/><circle cx="8.500" cy="8.500" r="3.500" fill="#9aa7b0"/></svg><span class="ml-[5px]">RadioButton</span></div>
            <div class="h-[26.3px] flex items-center pl-[15px]"><svg class="w-[17px] h-[17px]" viewBox="0 0 17 17"><path d="M0 3h17v11H0z" fill="#9aa7b0"/><path d="M2 5l13 7H2z" fill="#fff"/></svg><span class="ml-[5px]">ToggleButton</span></div>
            <div class="h-[26.3px] flex items-center pl-[15px]"><svg class="w-[17px] h-[17px]" viewBox="0 0 17 17"><rect x="0" y="6" width="9" height="5" rx="2.500" fill="#9aa7b0"/><circle cx="12.500" cy="8.500" r="4.500" fill="#9aa7b0"/></svg><span class="ml-[5px]">Switch</span></div>
            <div class="h-[26.3px] flex items-center pl-[15px]"><svg class="w-[17px] h-[17px]" viewBox="0 0 17 17"><circle cx="8.500" cy="8.500" r="8.500" fill="#9aa7b0"/><path d="M8.500 4v9M4 8.500h9" stroke="#fff" stroke-width="2"/></svg><span class="ml-[5px] whitespace-nowrap">FloatingAction...</span><svg class="w-[13px] h-[15px] ml-auto mr-[6px]"><use href="#dl"/></svg></div>
          </div>
        </div>
        <div class="h-[10px] border-b border-[#c9c9c9]"></div>
        <div class="h-[36px] flex items-center border-b border-[#c9c9c9] pl-[7px] tracking-[.2px]">
          <span class="w-[111px] whitespace-nowrap">Component Tree</span>
          <svg class="w-[16px] h-[16px] ml-[105px] text-[#6e6e6e]"><use href="#gear"/></svg>
          <div class="w-[15px] h-[2px] ml-[17px] bg-[#777]"></div>
        </div>
        <div class="flex-1 bg-[#fcfcfc] pt-[3px]">
          <div class="h-[22px] flex items-center pl-[9px] text-[15.3px]"><svg class="w-[18px] h-[18px] text-[#9aa7b0]"><use href="#constraint"/></svg><span class="ml-[6px]">ConstraintLayout</span></div>
        </div>
      </div>

      <!-- canvas -->
      <div class="w-[747px] flex flex-col">
        <div class="h-[37px] flex items-center border-b-2 border-[#bfbfbf] pl-[9px] pt-px">
          <svg class="w-[20px] h-[20px]" viewBox="0 0 20 20"><path d="M10 0l10 7-10 7L0 7z" fill="#3d9fe0"/><path d="M0 10l10 7 10-7v3l-10 7-10-7z" fill="#3d9fe0"/></svg>
          <div class="w-px h-[24px] ml-[10px] bg-[#d5d5d5]"></div>
          <svg class="w-[21px] h-[21px] ml-[10px]" viewBox="0 0 21 21"><circle cx="10.500" cy="10.500" r="9.500" fill="none" stroke="#777" stroke-dasharray="20 4"/><path d="M7 1l13 11-6 7L1 8z" fill="none" stroke="#777" stroke-width="1.300"/></svg>
          <div class="w-px h-[24px] ml-[9px] bg-[#d5d5d5]"></div>
          <svg class="w-[12px] h-[18px] ml-[17px]" viewBox="0 0 12 18"><path d="M1 1h10v16H1z" fill="none" stroke="#777" stroke-width="2"/><path d="M1 13h10" stroke="#777"/></svg>
          <span class="w-[46px] ml-[6px] whitespace-nowrap">Pixel 3</span>
          <svg class="w-[10px] h-[6px] ml-[5px]"><use href="#caret"/></svg>
          <svg class="w-[16px] h-[11px] ml-[16px] text-[#3ddc84]"><use href="#droid"/></svg>
          <span class="w-[18px] ml-[5px]">29</span>
          <svg class="w-[10px] h-[6px] ml-[5px]"><use href="#caret"/></svg>
          <svg class="w-[17px] h-[17px] ml-[16px]" viewBox="0 0 17 17"><circle cx="8.500" cy="8.500" r="7.700" fill="none" stroke="#777" stroke-width="1.400"/><path d="M8.500 3a5.500 5.500 0 0 1 0 11z" fill="#777"/></svg>
          <span class="w-[93px] ml-[5px] whitespace-nowrap">NoActionBar</span>
          <svg class="w-[10px] h-[6px] ml-[5px]"><use href="#caret"/></svg>
          <div class="w-px h-[24px] ml-[10px] bg-[#d5d5d5]"></div>
          <svg class="w-[17px] h-[17px] ml-[14px]" viewBox="0 0 17 17"><circle cx="8.500" cy="8.500" r="8.500" fill="#777"/><path d="M3 3l4 2 1 3-3 2-3-2zM10 2l4 3-2 3zM10 11l4-1-2 5z" fill="#f2f2f2"/></svg>
          <span class="w-[105px] ml-[5px] whitespace-nowrap">Default (en-us)</span>
          <svg class="w-[10px] h-[6px] ml-[5px]"><use href="#caret"/></svg>
          <svg class="w-[17px] h-[17px] ml-auto mr-[12px]" viewBox="0 0 17 17"><circle cx="8.500" cy="8.500" r="8.500" fill="#9a9a9a"/><path d="M7.500 3h2l-.3 7h-1.400zM7.500 11.500h2v2h-2z" fill="#fff"/></svg>
        </div>
        <div class="h-[36px] flex items-center border-b border-[#cfcfcf] pl-[10px]">
          <svg class="w-[18px] h-[14px]" viewBox="0 0 18 14"><path d="M0 7c4-8 14-8 18 0-4 8-14 8-18 0z" fill="#777"/><circle cx="9" cy="7" r="3.500" fill="#f2f2f2"/><circle cx="9" cy="7" r="2" fill="#777"/></svg>
          <svg class="w-[18px] h-[18px] ml-[14px]" viewBox="0 0 18 18"><path d="M3 2v8a6 6 0 0 0 12 0V7h-3v3a3 3 0 0 1-6 0V2z" fill="#777"/><path d="M12 1h3v4h-3z" fill="#3d9fe0"/><path d="M1 2l16 15" stroke="#777" stroke-width="1.300"/></svg>
          <div class="w-[42px] h-[22px] ml-[11px] border-b border-x border-[#333] text-[14px] text-center leading-[16px] tracking-[.5px] [border-image:linear-gradient(to_top,#333_6px,transparent_6px)_1]">0dp</div>
          <div class="w-px h-[24px] ml-[8px] bg-[#d5d5d5]"></div>
          <svg class="w-[20px] h-[20px] ml-[10px]" viewBox="0 0 20 20"><circle cx="3" cy="17" r="2.500" fill="#777"/><circle cx="13" cy="3" r="2.500" fill="#777"/><path d="M3 17c6 0 1-14 10-14" fill="none" stroke="#777" stroke-width="1.600"/><path d="M13 12l6 6M19 12l-6 6" stroke="#e05555" stroke-width="1.600"/></svg>
          <svg class="w-[18px] h-[18px] ml-[14px]" viewBox="0 0 18 18"><path d="M1 17L11 7" stroke="#777" stroke-width="2.500"/><path d="M14 1v3M12 3h4M16 8h2M6 2v3" stroke="#3d9fe0" stroke-width="1.300"/></svg>
          <div class="w-px h-[24px] ml-[11px] bg-[#d5d5d5]"></div>
          <svg class="w-[16px] h-[20px] ml-[14px]" viewBox="0 0 16 20"><path d="M1 1h10M1 16h10M6 3v2M6 7v2M6 11v2" stroke="#666" stroke-width="2"/><path d="M10 17h6l-3 3z" fill="#444"/></svg>
          <svg class="w-[15px] h-[15px] ml-auto mr-[13px]" viewBox="0 0 15 15"><circle cx="7.500" cy="7.500" r="7.500" fill="#777"/><path d="M5 5.500a2.500 2.500 0 1 1 3.500 2.300c-.7.300-1 .7-1 1.500M6.700 11h1.600v1.700H6.700z" fill="none" stroke="#fff" stroke-width="1.300"/></svg>
        </div>
        <div class="relative flex-1 bg-[#f5f5f5] pl-[227px] pt-[71px]">
          <div class="w-[291px] h-[581px] bg-[#2e2e2e] border border-[#7fb0dc]"></div>
          <svg class="absolute left-[522px] top-[657px] w-[20px] h-[20px]" viewBox="0 0 20 20"><path d="M1 19L19 1M9 19L19 9" stroke="#777" stroke-width="1.200"/></svg>
          <div class="absolute left-[694px] top-[522px] w-[34px] h-[38px] bg-white border border-[#d4d4d4] rounded-[3px] flex items-center justify-center">
            <svg class="w-[17px] h-[18px]" viewBox="0 0 17 18"><path d="M6 2h1.500v7H6zM8.500 1H10v8H8.500zM11 2h1.500v7H11zM13.500 4H15v9a5 5 0 0 1-5 5H8a4 4 0 0 1-3-1.500L0 11l1.500-1L5 12V4h1v8" fill="#6e6e6e"/><path d="M5 9h10v6H6z" fill="#6e6e6e"/></svg>
          </div>
          <div class="absolute left-[694px] top-[565px] w-[34px] h-[134px] bg-white border border-[#d4d4d4] rounded-[3px] flex flex-col items-center text-[#6e6e6e]">
            <div class="h-[36px] pt-[3px] text-[24px] leading-[28px] font-bold">+</div>
            <div class="w-[13px] h-[2px] mt-[14px] bg-[#c6c6c6]"></div>
            <b class="mt-[24px] text-[13px]">1:1</b>
            <svg class="w-[17px] h-[15px] mt-[19px]" viewBox="0 0 17 15"><path d="M.5.500h16v14H.5z" fill="#f2f2f2" stroke="#c6c6c6"/><path d="M4 6V3h3M10 12h3V9" fill="none" stroke="#aaa"/></svg>
          </div>
        </div>
      </div>

      <!-- attributes -->
      <div class="w-[349px] flex flex-col border-l border-[#c9c9c9] text-[14px]">
        <div class="h-[37px] flex items-center border-b-2 border-[#bfbfbf] pl-[7px] pt-[1px] tracking-[.2px]">
          <span class="w-[66px]">Attributes</span>
          <svg class="w-[18px] h-[18px] ml-[186px] text-[#666]"><use href="#search"/></svg>
          <svg class="w-[16px] h-[16px] ml-[15px] text-[#6e6e6e]"><use href="#gear"/></svg>
          <div class="w-[15px] h-[2px] ml-[17px] bg-[#777]"></div>
        </div>
        <div class="flex-1 bg-[#fcfcfc]">
          <div class="h-[31px] flex items-center border-b border-[#d0d0d0] pl-[9px] pr-[8px] pt-px text-[15.5px]">
            <svg class="w-[18px] h-[18px] text-[#9aa7b0]"><use href="#constraint"/></svg>
            <span class="ml-[7px]">&lt;unnamed&gt;</span>
            <span class="ml-auto text-[#c0c0c0]">ConstraintLayout</span>
          </div>
          <div class="h-[40px] flex items-center border-b border-[#d0d0d0] pl-[9px] pt-[1px]">
            <span class="w-[133px]">id</span>
            <div class="w-[184px] h-[22px] bg-white border border-[#c9c9c9]"></div>
          </div>
          <div class="h-[32px] flex items-center bg-[#f2f2f2] border-b border-[#d0d0d0] pl-[10px] text-[15.5px]">
            <svg class="w-[12px] h-[12px]"><use href="#down"/></svg><b class="ml-[1px]">Declared Attributes</b>
            <div class="ml-auto text-[#6e6e6e] flex items-center gap-[13px] pr-[9px]">
              <svg class="w-[13px] h-[13px]" viewBox="0 0 13 13"><path d="M6.500 0v13M0 6.500h13" stroke="#6e6e6e" stroke-width="2"/></svg>
              <div class="w-[13px] h-[2px] bg-[#777]"></div>
            </div>
          </div>
          <div class="h-[30px] flex items-center border-b border-[#e6e6e6]">
            <div class="w-[140px] h-full flex items-center pl-[16px] border-r border-[#e6e6e6]">layout_width</div>
            <span class="w-[146px] ml-[12px] text-[15.5px]">match_parent</span>
            <div class="w-[27px] h-[20px] bg-[#f5f5f5] border-l border-[#c9c9c9] flex items-center justify-center"><svg class="w-[10px] h-[6px]" viewBox="0 0 10 6"><path d="M0 0h10L5 6z" fill="#6e6e6e"/></svg></div>
            <div class="w-[6px] h-[18px] ml-[9px] rounded-full border border-[#c9c9c9]"></div>
          </div>
          <div class="h-[30px] flex items-center border-b border-[#e6e6e6]">
            <div class="w-[140px] h-full flex items-center pl-[16px] border-r border-[#e6e6e6]">layout_height</div>
            <span class="w-[146px] ml-[12px] text-[15.5px]">match_parent</span>
            <div class="w-[27px] h-[20px] bg-[#f5f5f5] border-l border-[#c9c9c9] flex items-center justify-center"><svg class="w-[10px] h-[6px]" viewBox="0 0 10 6"><path d="M0 0h10L5 6z" fill="#6e6e6e"/></svg></div>
            <div class="w-[6px] h-[18px] ml-[9px] rounded-full border border-[#c9c9c9]"></div>
          </div>
          <div class="h-[30px] flex items-center border-b border-[#e6e6e6]">
            <div class="w-[140px] h-full flex items-center pl-[5px] border-r border-[#e6e6e6]">
              <svg class="w-[12px] h-[12px]" viewBox="0 0 12 12"><path d="M0 10.500L5.500 5a3.500 3.500 0 0 1 4.500-4.500L8 2.500 9.500 4l2-2A3.500 3.500 0 0 1 7 6.500L1.500 12z" fill="#6e6e6e"/></svg>
              <span class="ml-[3px]">context</span>
            </div>
            <span class="w-[186px] ml-[8px] text-[15.5px]">.MainActivity</span>
            <div class="w-[6px] h-[18px] rounded-full border border-[#c9c9c9]"></div>
          </div>
          <div class="h-[5px] border-b border-[#d0d0d0]"></div>
          <div class="h-[32px] flex items-center bg-[#f2f2f2] border-b border-[#d0d0d0] pl-[10px] text-[15.5px]">
            <svg class="w-[12px] h-[12px]"><use href="#down"/></svg><b class="ml-[1px]">Layout</b>
          </div>
          <div class="pt-[5px]">
            <div class="h-[30.3px] flex items-center pl-[9px]"><span class="w-[133px]">layout_width</span><div class="w-[184px] h-[22px] bg-white border border-[#c9c9c9] rounded-[3px] flex items-center pl-[7px] text-[15.5px]">match_parent<div class="ml-auto w-[28px] h-full border-l border-[#c9c9c9] flex items-center justify-center"><svg class="w-[10px] h-[6px]" viewBox="0 0 10 6"><path d="M0 0h10L5 6z" fill="#6e6e6e"/></svg></div></div><div class="w-[6px] h-[18px] ml-[8px] rounded-full border border-[#c9c9c9]"></div></div>
            <div class="h-[30.3px] flex items-center pl-[9px]"><span class="w-[133px]">layout_height</span><div class="w-[184px] h-[22px] bg-white border border-[#c9c9c9] rounded-[3px] flex items-center pl-[7px] text-[15.5px]">match_parent<div class="ml-auto w-[28px] h-full border-l border-[#c9c9c9] flex items-center justify-center"><svg class="w-[10px] h-[6px]" viewBox="0 0 10 6"><path d="M0 0h10L5 6z" fill="#6e6e6e"/></svg></div></div><div class="w-[6px] h-[18px] ml-[8px] rounded-full border border-[#c9c9c9]"></div></div>
            <div class="h-[30.3px] flex items-center pl-[9px]"><span class="w-[133px]">visibility</span><div class="w-[184px] h-[22px] bg-white border border-[#c9c9c9] rounded-[3px] flex items-center"><div class="ml-auto w-[28px] h-full border-l border-[#c9c9c9] flex items-center justify-center"><svg class="w-[10px] h-[6px]" viewBox="0 0 10 6"><path d="M0 0h10L5 6z" fill="#6e6e6e"/></svg></div></div><div class="w-[6px] h-[18px] ml-[8px] rounded-full border border-[#c9c9c9]"></div></div>
            <div class="h-[30.3px] flex items-center pl-[9px]"><span class="w-[133px] flex items-center"><svg class="w-[12px] h-[12px] -ml-[3px] mr-[2px]" viewBox="0 0 12 12"><path d="M0 10.500L5.500 5a3.500 3.500 0 0 1 4.500-4.500L8 2.500 9.500 4l2-2A3.500 3.500 0 0 1 7 6.500L1.500 12z" fill="#6e6e6e"/></svg>visibility</span><div class="w-[184px] h-[22px] bg-white border border-[#c9c9c9] rounded-[3px] flex items-center"><div class="ml-auto w-[28px] h-full border-l border-[#c9c9c9] flex items-center justify-center"><svg class="w-[10px] h-[6px]" viewBox="0 0 10 6"><path d="M0 0h10L5 6z" fill="#6e6e6e"/></svg></div></div><div class="w-[6px] h-[18px] ml-[8px] rounded-full border border-[#c9c9c9]"></div></div>
          </div>
          <div class="h-[4px] border-b border-[#d0d0d0]"></div>
          <div class="h-[32px] flex items-center bg-[#f2f2f2] border-b border-[#d0d0d0] pl-[10px] text-[15.5px]">
            <svg class="w-[12px] h-[12px]"><use href="#down"/></svg><b class="ml-[1px]">Common Attributes</b>
          </div>
          <div class="pt-[8px]">
            <div class="h-[30px] flex items-center pl-[9px]"><span class="w-[133px]">minWidth</span><div class="w-[184px] h-[22px] bg-white border border-[#c9c9c9]"></div><div class="w-[6px] h-[18px] ml-[8px] rounded-full border border-[#c9c9c9]"></div></div>
            <div class="h-[30px] flex items-center pl-[9px]"><span class="w-[133px]">maxWidth</span><div class="w-[184px] h-[22px] bg-white border border-[#c9c9c9]"></div><div class="w-[6px] h-[18px] ml-[8px] rounded-full border border-[#c9c9c9]"></div></div>
            <div class="h-[30px] flex items-center pl-[9px]"><span class="w-[133px]">minHeight</span><div class="w-[184px] h-[22px] bg-white border border-[#c9c9c9]"></div><div class="w-[6px] h-[18px] ml-[8px] rounded-full border border-[#c9c9c9]"></div></div>
            <div class="h-[30px] flex items-center pl-[9px]"><span class="w-[133px]">maxHeight</span><div class="w-[184px] h-[22px] bg-white border border-[#c9c9c9]"></div><div class="w-[6px] h-[18px] ml-[8px] rounded-full border border-[#c9c9c9]"></div></div>
            <div class="h-[30px] flex items-center pl-[9px]"><span class="w-[133px]">alpha</span><div class="w-[184px] h-[22px] bg-white border border-[#c9c9c9]"></div><div class="w-[6px] h-[18px] ml-[8px] rounded-full border border-[#c9c9c9]"></div></div>
          </div>
          <div class="h-[33px] flex items-center bg-[#f2f2f2] border-y border-[#d0d0d0] mt-[3px] pl-[8px] text-[15.5px]">
            <svg class="w-[12px] h-[12px]"><use href="#right"/></svg><b class="ml-[2px]">All Attributes</b>
          </div>
        </div>
      </div>
    </div>
    <div class="flex-1 border-t-2 border-[#e0e0e0]"></div>
  </div>

  <!-- right stripe -->
  <div class="w-[25px] flex flex-col items-center border-l border-[#c9c9c9] text-[13px] text-[#222]">
    <svg class="w-[17px] h-[13px] mt-[13px]" viewBox="0 0 20 15"><path d="M1 15C1 7 5 4 10 4c3 0 4 1 5 2l2-2 3 0c0 3-2 5-4 5v6h-3v-3H7v3H4v-3z" fill="#6e6e6e"/></svg>
    <span class="mt-[6px] [writing-mode:vertical-rl] whitespace-nowrap">Gradle</span>
    <svg class="w-[14px] h-[16px] mt-[36px]" viewBox="0 0 14 16"><path d="M1 1h9v3M1 1v13h3" fill="none" stroke="#6e6e6e" stroke-width="1.400"/><path d="M5 5h8v10H5z" fill="none" stroke="#6e6e6e" stroke-width="1.600"/></svg>
    <span class="mt-[4px] [writing-mode:vertical-rl] whitespace-nowrap">Layout Validation</span>
    <svg class="w-[12px] h-[16px] mt-[493px]" viewBox="0 0 12 16"><path d="M1 1h10v14H1z" fill="none" stroke="#6e6e6e" stroke-width="1.600"/><path d="M1 12h10" stroke="#6e6e6e"/></svg>
    <span class="mt-[4px] [writing-mode:vertical-rl] whitespace-nowrap">Device File Explorer</span>
  </div>
</div>

<!-- tool window bar -->
<div class="h-[28px] flex items-center border-t border-[#c9c9c9] text-[14px] tracking-[.1px] pl-[42px] pt-[2px]">
  <svg class="w-[13px] h-[11px]" viewBox="0 0 13 11"><path d="M0 0h2v2H0zM4 0h9v2H4zM0 4h2v2H0zM4 4h9v2H4zM0 8h2v2H0zM4 8h9v2H4z" fill="#6e6e6e"/></svg>
  <span class="ml-[6px]">TODO</span>
  <svg class="w-[14px] h-[14px] ml-[32px]" viewBox="0 0 14 14"><path d="M1 0h2v14H1zM3 10h4M9 7V2M6 5l3-3 3 3" fill="#6e6e6e" stroke="#6e6e6e" stroke-width="1.300"/></svg>
  <span class="ml-[5px] whitespace-nowrap"><u>9</u>: Version Control</span>
  <svg class="w-[14px] h-[14px] ml-[31px]" viewBox="0 0 14 14"><path d="M0 0h14v14H0z" fill="#6e6e6e"/><path d="M3 3l4 3-4 3M7 11h4" fill="none" stroke="#fff" stroke-width="1.300"/></svg>
  <span class="ml-[6px]">Terminal</span>
  <svg class="w-[15px] h-[15px] ml-[26px]" viewBox="0 0 15 15"><path d="M1 4l4-3 2 2-3 3zM5 4l9 9-2 2L3 6z" fill="#6e6e6e"/></svg>
  <span class="ml-[6px]">Build</span>
  <svg class="w-[14px] h-[11px] ml-[27px]" viewBox="0 0 14 11"><path d="M0 0h14v2H0zM0 4h9v2H0zM0 8h14v2H0z" fill="#6e6e6e"/></svg>
  <span class="ml-[5px] whitespace-nowrap tracking-[.3px]"><u>6</u>: Logcat</span>
  <div class="ml-auto flex items-center pr-[41px] tracking-[.25px]">
    <div class="w-[16px] h-[16px] rounded-full bg-[#f0a30a] text-[11px] font-bold flex items-center justify-center">1</div>
    <span class="ml-[5px] whitespace-nowrap">Event Log</span>
    <svg class="w-[17px] h-[16px] ml-[32px]" viewBox="0 0 17 16"><path d="M.5.500h12M.500.500v9M3 3h10v8H3z" fill="none" stroke="#8c8c8c"/><circle cx="11" cy="10" r="3" fill="#f2f2f2" stroke="#6e6e6e" stroke-width="1.300"/><path d="M13 12l3 3" stroke="#6e6e6e" stroke-width="1.500"/></svg>
    <span class="ml-[5px] whitespace-nowrap">Layout Inspector</span>
  </div>
</div>

<!-- status bar -->
<div class="h-[26px] flex items-center border-t border-[#c9c9c9] pl-[9px]">
  <svg class="w-[16px] h-[16px]" viewBox="0 0 16 16"><path d="M4.500.500h11v11h-11zM.500 4.500v11h11" fill="none" stroke="#777"/></svg>
  <span class="ml-[10px]">Gradle sync finished in 23 s 630 ms (14 minutes ago)</span>
  <div class="ml-auto flex items-center pr-[13px]">
    <span>49 chars</span><span class="ml-[19px]">1:50</span><span class="ml-[16px]">CRLF</span><span class="ml-[15px] text-[#9a9a9a]">UTF-8</span><span class="ml-[14px]">4 spaces</span><span class="ml-[16px]">Git: master</span>
    <svg class="w-[15px] h-[15px] ml-[13px]" viewBox="0 0 15 15"><path d="M1 6V3a2.500 2.500 0 0 1 5 0v3" fill="none" stroke="#6e6e6e" stroke-width="1.400"/><path d="M4 7h10v8H4z" fill="#6e6e6e"/></svg>
    <svg class="w-[15px] h-[15px] ml-[17px]" viewBox="0 0 15 15"><path d="M2 6h11L11.500 1h-8zM0 6h15v1.500H0z" fill="#777"/><circle cx="7.500" cy="10" r="4" fill="#d5d5d5" stroke="#777"/><path d="M3 15c1-2 8-2 9 0z" fill="#777"/></svg>
  </div>
</div>

</body>
</html>
